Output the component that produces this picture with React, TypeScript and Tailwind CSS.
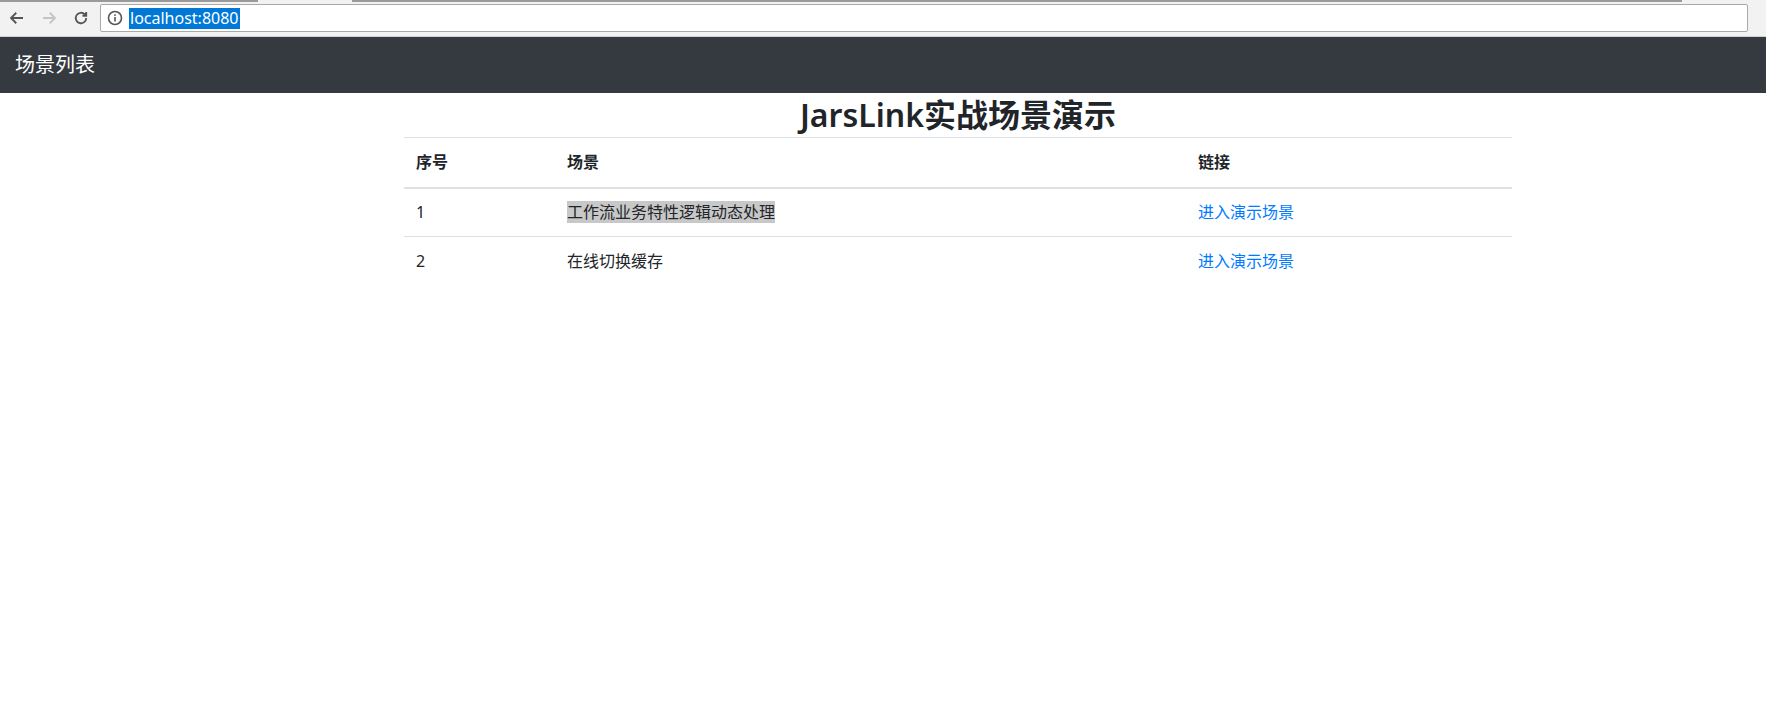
export default function App() {
  const font = { fontFamily: '"Segoe UI", "Noto Sans", "Noto Sans CJK SC", sans-serif' };
  return (
    <div className="w-[1766px] h-[702px] bg-white overflow-hidden" style={font}>
      <div className="h-[37px] bg-[#f2f2f2] relative flex items-center border-b border-[#d0d0d0]">
        <div className="absolute top-0 left-0 w-[258px] h-[2px] bg-[#9a9a9a]" />
        <div className="absolute top-0 left-[352px] w-[1330px] h-[2px] bg-[#9a9a9a]" />
        <div className="flex items-center gap-[14px] pl-[8px] pr-[10px]">
          <svg width="18" height="18" viewBox="0 0 24 24" fill="none" stroke="#555" strokeWidth="2.4"><path d="M20 12H5M11 5l-7 7 7 7" /></svg>
          <svg width="18" height="18" viewBox="0 0 24 24" fill="none" stroke="#c4c4c4" strokeWidth="2.4"><path d="M4 12h15M13 5l7 7-7 7" /></svg>
          <svg width="18" height="18" viewBox="0 0 24 24" fill="none" stroke="#555" strokeWidth="2.4"><path d="M19 12a7 7 0 1 1-2.1-5" /><path d="M19 4v5h-5" fill="#555" /></svg>
        </div>
        <div className="flex-1 h-[28px] mr-[18px] bg-white border border-[#a9a9a9] rounded-[2px] flex items-center pl-[6px]">
          <svg width="16" height="16" viewBox="0 0 16 16"><circle cx="8" cy="8" r="6.5" fill="none" stroke="#555" strokeWidth="1.6" /><rect x="7.2" y="7" width="1.6" height="4.5" fill="#555" /><rect x="7.2" y="4.3" width="1.6" height="1.6" fill="#555" /></svg>
          <span className="ml-[6px] bg-[#0078d7] text-white text-[16px] leading-[21px] px-[1px]">localhost:8080</span>
        </div>
      </div>
      <div className="h-[56px] bg-[#343a40] flex items-center pl-[15px]">
        <span className="text-white text-[20px]">场景列表</span>
      </div>
      <div className="ml-[404px] w-[1108px]">
        <h1 className="text-center text-[32px] font-semibold leading-[44px] text-[#212529]">JarsLink实战场景演示</h1>
        <table className="w-full text-[16px] text-[#212529] border-collapse">
          <thead>
            <tr className="border-t border-[#dee2e6] border-b-2">
              <th className="w-[151px] text-left font-bold px-[12px] h-[50px]">序号</th>
              <th className="w-[631px] text-left font-bold px-[12px]">场景</th>
              <th className="text-left font-bold px-[12px]">链接</th>
            </tr>
          </thead>
          <tbody>
            <tr className="border-t border-[#dee2e6] h-[49px]">
              <td className="px-[12px]">1</td>
              <td className="px-[12px]"><span className="bg-[#c8c8c8]">工作流业务特性逻辑动态处理</span></td>
              <td className="px-[12px] text-[#007bff]">进入演示场景</td>
            </tr>
            <tr className="border-t border-[#dee2e6] h-[49px]">
              <td className="px-[12px]">2</td>
              <td className="px-[12px]">在线切换缓存</td>
              <td className="px-[12px] text-[#007bff]">进入演示场景</td>
            </tr>
          </tbody>
        </table>
      </div>
    </div>
  );
}
